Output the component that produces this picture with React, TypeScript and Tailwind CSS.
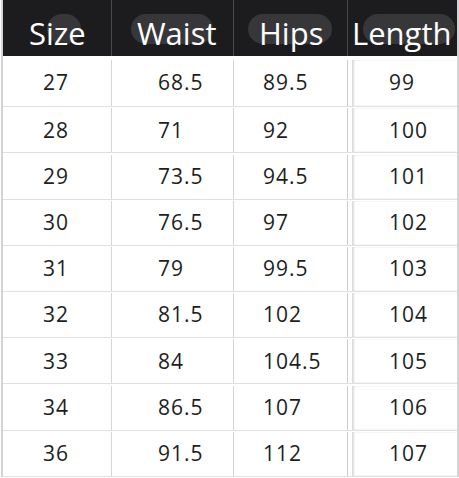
const headers = ["Size", "Waist", "Hips", "Length"];

const rows = [
  ["27", "68.5", "89.5", "99"],
  ["28", "71", "92", "100"],
  ["29", "73.5", "94.5", "101"],
  ["30", "76.5", "97", "102"],
  ["31", "79", "99.5", "103"],
  ["32", "81.5", "102", "104"],
  ["33", "84", "104.5", "105"],
  ["34", "86.5", "107", "106"],
  ["36", "91.5", "112", "107"],
];

const blobs = [
  "left-[44px] w-[34px]",
  "left-[128px] w-[82px]",
  "left-[245px] w-[84px]",
  "left-[360px] w-[92px]",
];

const colCls = [
  "pl-[40px] border-r border-[#d6d6d6]",
  "pl-[46px] border-r border-[#d6d6d6]",
  "pl-[29px] border-r border-[#cdcdcd]",
  "pl-[41px] shadow-[inset_4px_0_0_#fff,inset_6px_0_2px_#dcdcdc]",
];

const headCls = [
  "pl-[26px] border-r border-[#4a4a4d]",
  "pl-[25px] border-r border-[#4a4a4d]",
  "pl-[25px] border-r border-[#4a4a4d]",
  "pl-[4px]",
];

export default function App() {
  return (
    <div
      className="w-[459px] h-[478px] bg-white overflow-hidden pl-px"
      style={{ fontFamily: '"Open Sans", "Noto Sans", sans-serif' }}
    >
      <div className="h-[477px] border-l-2 border-r-2 border-[#d4d4d4] grid grid-cols-[109px_122px_114px_1fr]">
        {/* header */}
        <div className="col-span-4 relative grid grid-cols-subgrid h-[56px] bg-[#1c1c1f] text-white text-[31px] leading-none">
          {blobs.map((b) => (
            <div key={b} className={`absolute top-[14px] h-[30px] rounded-full bg-[#37373a] ${b}`} />
          ))}
          {headers.map((h, i) => (
            <div key={h} className={`relative flex items-center pt-[10px] ${headCls[i]}`}>
              {h}
            </div>
          ))}
        </div>

        {rows.map((r, ri) => (
          <div
            key={r[0]}
            className={`col-span-4 grid grid-cols-subgrid border-b border-[#e0e0e0] ${
              ri === 0 ? "h-[51px] pt-[4px]" : "h-[46px] pt-[1px]"
            }`}
          >
            {r.map((v, i) => (
              <div
                key={i}
                className={`flex items-center text-[21px] tracking-[1px] text-[#1e1e1e] ${colCls[i]}`}
              >
                {v}
              </div>
            ))}
          </div>
        ))}
      </div>
    </div>
  );
}
